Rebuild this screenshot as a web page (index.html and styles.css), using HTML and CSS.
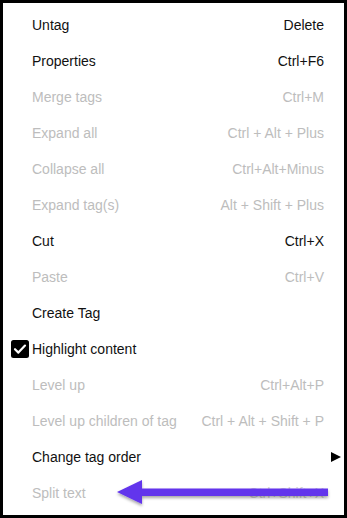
FILE: index.html
```html
<!DOCTYPE html>
<html lang="en">
<head>
    <meta charset="UTF-8">
    <meta name="viewport" content="width=device-width, initial-scale=1.0">
    <title>Context menu</title>
    <link rel="stylesheet" href="styles.css">
</head>
<body>

    <div class="menu">
        <div class="item"><span class="mark"></span><span class="label">Untag</span><span class="key">Delete</span><span class="sub"></span></div>
        <div class="item"><span class="mark"></span><span class="label">Properties</span><span class="key">Ctrl+F6</span><span class="sub"></span></div>
        <div class="item disabled"><span class="mark"></span><span class="label">Merge tags</span><span class="key">Ctrl+M</span><span class="sub"></span></div>
        <div class="item disabled"><span class="mark"></span><span class="label">Expand all</span><span class="key">Ctrl + Alt + Plus</span><span class="sub"></span></div>
        <div class="item disabled"><span class="mark"></span><span class="label">Collapse all</span><span class="key">Ctrl+Alt+Minus</span><span class="sub"></span></div>
        <div class="item disabled"><span class="mark"></span><span class="label">Expand tag(s)</span><span class="key">Alt + Shift + Plus</span><span class="sub"></span></div>
        <div class="item"><span class="mark"></span><span class="label">Cut</span><span class="key">Ctrl+X</span><span class="sub"></span></div>
        <div class="item disabled"><span class="mark"></span><span class="label">Paste</span><span class="key">Ctrl+V</span><span class="sub"></span></div>
        <div class="item"><span class="mark"></span><span class="label">Create Tag</span><span class="key"></span><span class="sub"></span></div>
        <div class="item">
            <span class="mark">
                <svg class="check" width="18" height="18" viewBox="0 0 18 18">
                    <rect x="0" y="0" width="18" height="18" rx="2.5" fill="#000"/>
                    <path d="M4 9.2 L7.4 12.6 L14 5.6" fill="none" stroke="#fff" stroke-width="2.2" stroke-linecap="round" stroke-linejoin="round"/>
                </svg>
            </span>
            <span class="label">Highlight content</span><span class="key"></span><span class="sub"></span>
        </div>
        <div class="item disabled"><span class="mark"></span><span class="label">Level up</span><span class="key">Ctrl+Alt+P</span><span class="sub"></span></div>
        <div class="item disabled"><span class="mark"></span><span class="label">Level up children of tag</span><span class="key">Ctrl + Alt + Shift + P</span><span class="sub"></span></div>
        <div class="item"><span class="mark"></span><span class="label">Change tag order</span><span class="key"></span><span class="sub"><span class="tri"></span></span></div>
        <div class="item disabled"><span class="mark"></span><span class="label">Split text</span><span class="key faded">Ctrl+Shift+X</span><span class="sub"></span></div>
    </div>

    <!-- annotation arrow -->
    <svg class="pointer" width="220" height="30" viewBox="0 0 220 30">
        <defs>
            <filter id="shadow" x="-10%" y="-50%" width="120%" height="220%">
                <feDropShadow dx="0" dy="2" stdDeviation="1.6" flood-color="#000" flood-opacity="0.35"/>
            </filter>
        </defs>
        <g filter="url(#shadow)">
            <polygon points="2,13 27,1 27,25" fill="#6234ec"/>
            <rect x="26" y="9.5" width="187" height="7.5" fill="#6234ec"/>
        </g>
    </svg>

</body>
</html>
```

FILE: styles.css
```css
body {
    margin: 0;
    padding: 0;
    font-family: "Liberation Sans", Arial, sans-serif;
    background-color: #fff;
}

.menu {
    width: 347px;
    height: 518px;
    box-sizing: border-box;
    border: 3px solid #000;
    padding: 4px 0;
    background-color: #fff;
}

.item {
    display: grid;
    grid-template-columns: 21px 1fr auto 20px;
    align-items: center;
    height: 36px;
    padding-left: 8px;
    font-size: 14px;
    color: #111;
}

.item.disabled {
    color: #bdbdbd;
}

.mark {
    display: flex;
    align-items: center;
}

.check {
    display: block;
}

.key {
    text-align: right;
    white-space: nowrap;
}

.key.faded {
    color: #d2d2d2;
}

.sub {
    display: flex;
    justify-content: flex-end;
    padding-right: 3px;
}

.tri {
    width: 0;
    height: 0;
    border-top: 5px solid transparent;
    border-bottom: 5px solid transparent;
    border-left: 10px solid #000;
}

.pointer {
    position: absolute;
    left: 115px;
    top: 479px;
}
```
